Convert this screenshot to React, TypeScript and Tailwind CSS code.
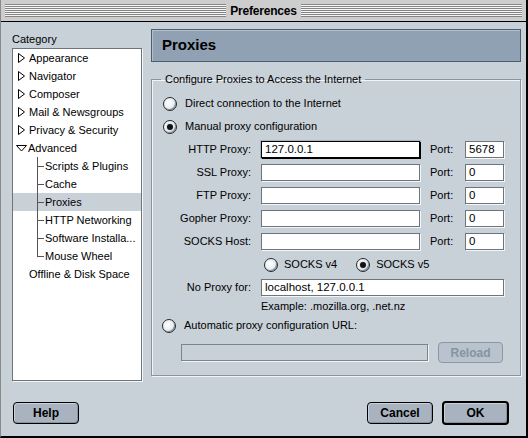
import React from "react";

function Radio({ on }: { on?: boolean }) {
  return (
    <span className="flex h-[14px] w-[14px] shrink-0 items-center justify-center rounded-full border border-[#2a2a2a] bg-[radial-gradient(circle_at_40%_40%,#ffffff_0%,#e6edf2_55%,#aebbc8_100%)] shadow-[inset_-1px_-1px_0_#8d99a6]">
      {on && <span className="h-[6px] w-[6px] rounded-full bg-[#111] shadow-[0_0_0_1px_#d9e0e6]" />}
    </span>
  );
}

function Field({ value, w, focus }: { value?: string; w: string; focus?: boolean }) {
  return (
    <div
      className={`${w} flex h-[17px] shrink-0 items-center bg-white px-[3px] text-[11.5px] leading-none text-black ${
        focus
          ? "border border-black shadow-[1px_1px_0_#000,0_0_0_1px_#a8b4c2]"
          : "border border-[#6d747c] shadow-[1px_1px_0_#f4f6f8]"
      }`}
    >
      {value}
    </div>
  );
}

function Triangle({ open }: { open?: boolean }) {
  if (open)
    return (
      <svg width="11" height="7" viewBox="0 0 11 7" className="shrink-0">
        <polygon points="0.5,0.5 10.5,0.5 5.5,6" fill="#fff" stroke="#000" strokeWidth="1" />
      </svg>
    );
  return (
    <svg width="7" height="10" viewBox="0 0 7 10" className="shrink-0">
      <polygon points="0.5,0.5 6.5,5 0.5,9.5" fill="#fff" stroke="#000" strokeWidth="1" />
    </svg>
  );
}

const topItems = ["Appearance", "Navigator", "Composer", "Mail & Newsgroups", "Privacy & Security"];
const children = ["Scripts & Plugins", "Cache", "Proxies", "HTTP Networking", "Software Installa...", "Mouse Wheel"];

function ProxyRow({ label, value, port, focus }: { label: string; value?: string; port: string; focus?: boolean }) {
  return (
    <div className="flex h-[17px] items-center">
      <span className="w-[88px] text-right">{label}</span>
      <div className="ml-[10px]">
        <Field value={value} w="w-[159px]" focus={focus} />
      </div>
      <span className="ml-[10px] w-[35px]">Port:</span>
      <Field value={port} w="w-[39px]" />
    </div>
  );
}

function Button({ label, def }: { label: string; def?: boolean }) {
  return (
    <div
      className={`flex items-center justify-center rounded-[4px] bg-[#a9b3bf] text-[12px] font-bold text-black shadow-[inset_1px_1px_0_#c9d1da,inset_-1px_-1px_0_#8892a0] ${
        def ? "h-[24px] w-[67px] border-2 border-black" : "h-[22px] w-[66px] border border-black"
      }`}
    >
      {label}
    </div>
  );
}

export default function App() {
  return (
    <div className="flex h-[438px] w-[528px] flex-col border-b-2 border-l border-r-2 border-b-black border-l-[#8a8a8a] border-r-black bg-[#c8d0d8] text-[11px] text-black [font-family:'Liberation_Sans',Arial,sans-serif]">
      {/* Title bar */}
      <div className="flex h-[22px] shrink-0 items-center border-b border-black bg-[#cdcdcd] px-[4px]">
        <div className="h-[13px] flex-1 bg-[repeating-linear-gradient(to_bottom,#858585_0px,#858585_1px,#f6f6f6_1px,#f6f6f6_2px)]" />
        <span className="px-[4px] text-[12px] font-bold leading-none tracking-[-0.2px]">Preferences</span>
        <div className="h-[13px] flex-1 bg-[repeating-linear-gradient(to_bottom,#858585_0px,#858585_1px,#f6f6f6_1px,#f6f6f6_2px)]" />
      </div>

      <div className="flex flex-1 flex-col">
        <div className="flex items-start">
          {/* Category tree */}
          <div className="ml-[11px] flex flex-col pt-[10px]">
            <span className="h-[14px] leading-[14px]">Category</span>
            <div className="mt-[2px] flex h-[333px] w-[130px] flex-col border border-[#6d747c] bg-white shadow-[1px_1px_0_#f4f6f8]">
              {topItems.map((t) => (
                <div key={t} className="flex h-[18px] items-center gap-[4px] pl-[5px] whitespace-nowrap">
                  <Triangle />
                  <span>{t}</span>
                </div>
              ))}
              <div className="flex h-[18px] items-center gap-[1px] pl-[3px]">
                <Triangle open />
                <span>Advanced</span>
              </div>
              {children.map((c, i) => (
                <div
                  key={c}
                  className={`flex h-[18px] items-center pl-[24px] whitespace-nowrap ${c === "Proxies" ? "bg-[#c8d0d8]" : ""}`}
                >
                  <div className="relative h-full w-[8px] shrink-0">
                    <span
                      className={`absolute left-0 top-0 border-l border-[#555] ${i === children.length - 1 ? "h-1/2" : "h-full"}`}
                    />
                    <span className="absolute left-0 top-1/2 w-[7px] border-t border-[#555]" />
                  </div>
                  <span>{c}</span>
                </div>
              ))}
              <div className="flex h-[18px] items-center pl-[16px] whitespace-nowrap">Offline &amp; Disk Space</div>
            </div>
          </div>

          {/* Panel */}
          <div className="ml-[9px] flex w-[370px] flex-col pt-[7px]">
            <div className="flex h-[33px] items-center border border-[#4e5d6d] bg-[#91a1b4] pl-[10px] text-[15px] font-bold shadow-[inset_1px_1px_0_#b2bfcd]">
              Proxies
            </div>

            <fieldset className="mt-[10px] border border-[#8b939c] shadow-[1px_1px_0_#f2f4f6,inset_1px_1px_0_#f2f4f6]">
              <legend className="ml-[9px] px-[4px] leading-[14px]">Configure Proxies to Access the Internet</legend>
              <div className="flex flex-col gap-[6px] pl-[11px] pt-[9px]">
                <div className="flex h-[17px] items-center gap-[8px]">
                  <Radio />
                  <span>Direct connection to the Internet</span>
                </div>
                <div className="flex h-[17px] items-center gap-[8px]">
                  <Radio on />
                  <span>Manual proxy configuration</span>
                </div>
                <ProxyRow label="HTTP Proxy:" value="127.0.0.1" port="5678" focus />
                <ProxyRow label="SSL Proxy:" port="0" />
                <ProxyRow label="FTP Proxy:" port="0" />
                <ProxyRow label="Gopher Proxy:" port="0" />
                <ProxyRow label="SOCKS Host:" port="0" />
                <div className="flex h-[17px] items-center pl-[101px]">
                  <Radio />
                  <span className="ml-[6px]">SOCKS v4</span>
                  <span className="ml-[19px]">
                    <Radio on />
                  </span>
                  <span className="ml-[6px]">SOCKS v5</span>
                </div>
                <div className="flex h-[17px] items-center">
                  <span className="w-[88px] text-right">No Proxy for:</span>
                  <div className="ml-[10px]">
                    <Field value="localhost, 127.0.0.1" w="w-[243px]" />
                  </div>
                </div>
              </div>
              <div className="ml-[109px] mt-[3px] h-[14px] leading-[14px]">Example: .mozilla.org, .net.nz</div>
              <div className="ml-[10px] mt-[4px] flex h-[17px] items-center gap-[8px]">
                <Radio />
                <span>Automatic proxy configuration URL:</span>
              </div>
              <div className="mb-[12px] ml-[29px] mt-[8px] flex h-[21px] items-center">
                <div className="h-[17px] w-[247px] border border-[#7b838d] bg-[#c8d0d8] shadow-[1px_1px_0_#f2f4f6]" />
                <div className="ml-[10px] flex h-[21px] w-[65px] items-center justify-center rounded-[4px] border border-[#8c97a4] bg-[#b9c3cd] text-[12px] font-bold text-[#8593a3]">
                  Reload
                </div>
              </div>
            </fieldset>
          </div>
        </div>

        {/* Buttons */}
        <div className="mt-auto mb-[11px] flex items-center pl-[12px] pr-[17px]">
          <Button label="Help" />
          <div className="flex-1" />
          <Button label="Cancel" />
          <div className="ml-[9px]">
            <Button label="OK" def />
          </div>
        </div>
      </div>
    </div>
  );
}
